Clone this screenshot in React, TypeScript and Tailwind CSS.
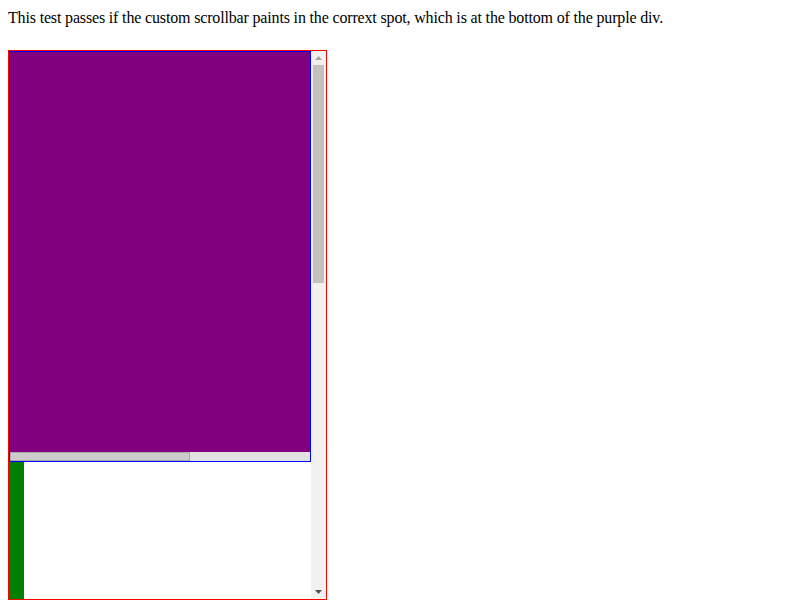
import React from 'react';

export default function App() {
  return (
    <div className="min-h-[600px] w-[800px] bg-white p-2 font-['Liberation_Serif',serif] text-black">
      <div className="h-[20px] text-[16px] leading-[20px] tracking-[-0.16px]">
        This test passes if the custom scrollbar paints in the corrext spot, which is at the bottom of the purple div.
      </div>

      {/* outer scroller */}
      <div className="mt-[22px] flex h-[550px] w-[319px] border border-[#ff0000]">
        <div className="flex w-[302px] flex-col">
          {/* inner scroller with custom scrollbar */}
          <div className="flex h-[411px] w-[302px] flex-col border border-[#0000ff]">
            <div className="h-[400px] w-full bg-[#800080]"></div>
            <div className="flex h-[9px] w-full bg-[#e2e2e2]">
              <div className="h-[9px] w-[180px] border border-[#a8a8a8] bg-[#cccccc]"></div>
            </div>
          </div>
          <div className="flex-1">
            <div className="h-full w-[15px] bg-[#008000]"></div>
          </div>
        </div>

        {/* native-looking vertical scrollbar */}
        <div className="flex w-[15px] flex-col items-center bg-[#f1f1f1]">
          <div className="flex h-[14px] w-full items-center justify-center">
            <svg width="7" height="4" viewBox="0 0 7 4">
              <polygon points="3.5,0 7,4 0,4" fill="#a3a3a3" />
            </svg>
          </div>
          <div className="h-[218px] w-[11px] bg-[#c1c1c1]"></div>
          <div className="flex-1"></div>
          <div className="flex h-[15px] w-full items-center justify-center">
            <svg width="7" height="4" viewBox="0 0 7 4">
              <polygon points="0,0 7,0 3.5,4" fill="#505050" />
            </svg>
          </div>
        </div>
      </div>
    </div>
  );
}
